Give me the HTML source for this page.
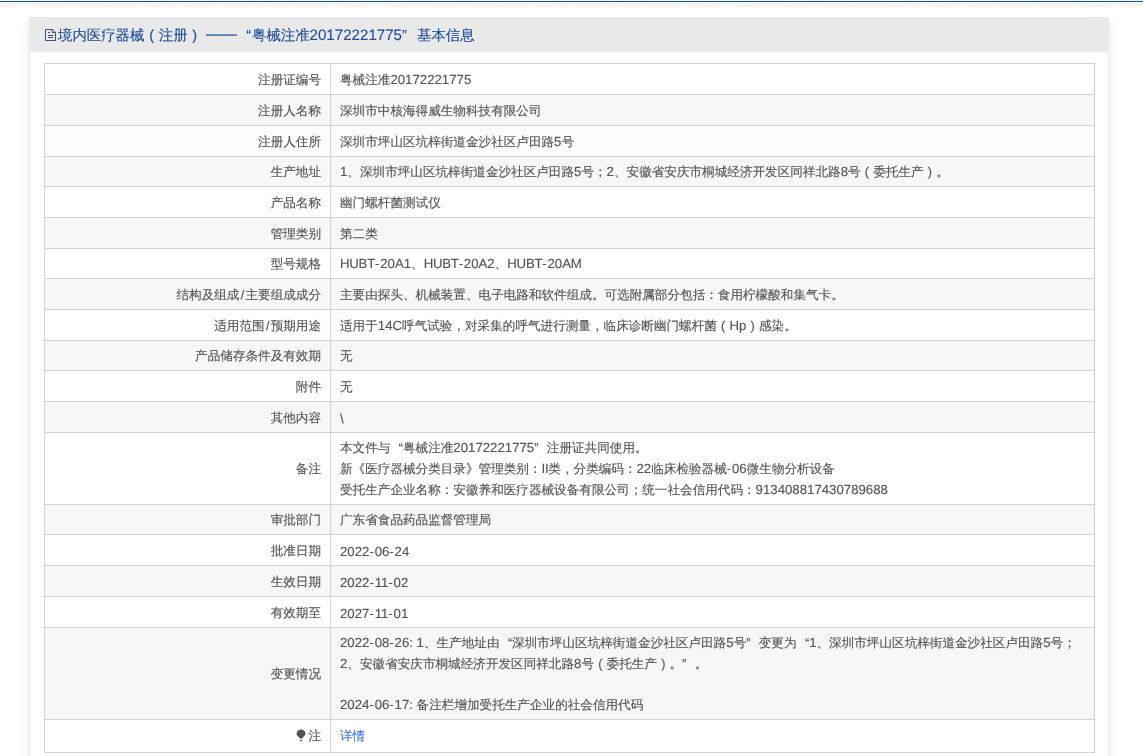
<!DOCTYPE html>
<html><head><meta charset="utf-8">
<style>
*{margin:0;padding:0;box-sizing:border-box}
html,body{width:1143px;height:756px;overflow:hidden;background:#fff}
body{font-family:"Liberation Sans",sans-serif;font-size:12.6px;color:#555;-webkit-text-stroke-width:0.15px;position:relative;text-spacing-trim:space-all;text-rendering:geometricPrecision}
.topline{position:absolute;left:0;top:1px;width:1143px;height:1px;background:#244d82}
.wrap{position:absolute;left:0;top:0;width:1143px;height:756px;will-change:transform}
.top0{position:absolute;left:0;top:0;width:1143px;height:1px;background:#e6f8fa}
.hatch{position:absolute;left:0;top:3px;width:1143px;height:4px;background:repeating-linear-gradient(135deg,#faf0e2 0,#faf0e2 1.2px,#f4f8fc 1.2px,#f4f8fc 3.15px)}
.panel{position:absolute;left:29px;top:17px;width:1080px;height:760px;background:#fff;border:1px solid #e9e9e9;box-shadow:-7px 0 9px -5px rgba(0,0,0,.07),7px 0 9px -5px rgba(0,0,0,.07)}
.ph{position:absolute;left:29px;top:17px;width:1080px;height:35px;background:#e9e9e9;color:#1f4f9c;font-size:14.4px;line-height:35px;white-space:nowrap}
.ph .t{position:absolute;left:29px;top:1px}
.ico{position:absolute;left:16px;top:11px;width:12px;height:14px}
.lt{font-size:1.05em}
.hy{letter-spacing:0.8px}
.lu{letter-spacing:-0.25px}
.ph .lt{letter-spacing:0}
.sl{display:inline-block;width:6px;text-align:center}
.pc{display:inline-block;width:1em;text-align:center}
.qo{display:inline-block;width:1em;text-align:right}
.hqo{display:inline-block;width:11px;padding-right:1px;text-align:right}
.hqc{display:inline-block;width:15px;text-align:left}
.dash{font-size:15.35px;position:relative;top:-1px}
.qc{display:inline-block;width:1em;text-align:left}
.hl{position:absolute;left:44px;width:1051px;height:1px;background:#d2d2d2}
.vl{position:absolute;top:63px;width:1px;height:690px;background:#d2d2d2}
.r{position:absolute;left:45px;width:1049px;background:#fff}
.r.g{background:#f7f7f7}
.r.h{background:#fbfcfe}
.l{position:absolute;left:0;top:0;width:285px;height:100%;text-align:right;padding-right:9px;display:flex;align-items:center;justify-content:flex-end;white-space:nowrap}
.v{position:absolute;left:286px;top:0;right:0;height:100%;padding-left:9px;display:flex;align-items:center;white-space:nowrap}
.m .v{line-height:20.8px}
.l>div,.v>div{position:relative;top:1px}
.last .l>div,.last .v>div{top:0}
a{color:#3d7ad6;text-decoration:none}
.pin{display:inline-block;width:10px;height:13px;margin-right:2px;vertical-align:-2px}
</style></head><body>
<div class="wrap">
<div class="top0"></div><div class="topline"></div><div class="hatch"></div>
<div class="panel"></div>
<div class="ph"><svg class="ico" viewBox="0 0 12 14"><path d="M0.5 1.5H7.5L10.5 4.5V12.5H0.5Z" fill="none" stroke="#42507e" stroke-width="1"/><path d="M7 1.5V4.5H10.5M3 4.5H5M3 7.5H8.5M3 9.5H8" fill="none" stroke="#42507e" stroke-width="1"/></svg><span class="t">境内医疗器械<span class="pc">(</span>注册<span class="pc">)</span><span class="lt"> </span><span class="dash">——</span><span class="lt"> </span><span class="hqo">“</span>粤械注准<span class="lt">20172221775</span><span class="hqc">”</span>基本信息</span></div>
<div class="r" style="top:64px;height:30px"><div class="l"><div>注册证编号</div></div><div class="v"><div>粤械注准<span class="lt">20172221775</span></div></div></div>
<div class="r g" style="top:95px;height:30px"><div class="l"><div>注册人名称</div></div><div class="v"><div>深圳市中核海得威生物科技有限公司</div></div></div>
<div class="r h" style="top:126px;height:30px"><div class="l"><div>注册人住所</div></div><div class="v"><div>深圳市坪山区坑梓街道金沙社区卢田路<span class="lt">5</span>号</div></div></div>
<div class="r g" style="top:157px;height:29px"><div class="l"><div>生产地址</div></div><div class="v"><div><span class="lt">1</span>、深圳市坪山区坑梓街道金沙社区卢田路<span class="lt">5</span>号；<span class="lt">2</span>、安徽省安庆市桐城经济开发区同祥北路<span class="lt">8</span>号<span class="pc">(</span>委托生产<span class="pc">)</span>。</div></div></div>
<div class="r" style="top:187px;height:30px"><div class="l"><div>产品名称</div></div><div class="v"><div>幽门螺杆菌测试仪</div></div></div>
<div class="r g" style="top:218px;height:30px"><div class="l"><div>管理类别</div></div><div class="v"><div>第二类</div></div></div>
<div class="r" style="top:249px;height:29px"><div class="l"><div>型号规格</div></div><div class="v"><div><span class="lt"><span class="lu">HUBT</span><span class="hy">-</span>20A1</span>、<span class="lt"><span class="lu">HUBT</span><span class="hy">-</span>20A2</span>、<span class="lt"><span class="lu">HUBT</span><span class="hy">-</span>20<span class="lu">AM</span></span></div></div></div>
<div class="r g" style="top:279px;height:30px"><div class="l"><div>结构及组成<span class="sl">/</span>主要组成成分</div></div><div class="v"><div>主要由探头、机械装置、电子电路和软件组成。可选附属部分包括：食用柠檬酸和集气卡。</div></div></div>
<div class="r" style="top:310px;height:30px"><div class="l"><div>适用范围<span class="sl">/</span>预期用途</div></div><div class="v"><div>适用于<span class="lt">14C</span>呼气试验，对采集的呼气进行测量，临床诊断幽门螺杆菌<span class="pc">(</span><span class="lt">Hp</span><span class="pc">)</span>感染。</div></div></div>
<div class="r g" style="top:341px;height:29px"><div class="l"><div>产品储存条件及有效期</div></div><div class="v"><div>无</div></div></div>
<div class="r" style="top:371px;height:30px"><div class="l"><div>附件</div></div><div class="v"><div>无</div></div></div>
<div class="r g" style="top:402px;height:30px"><div class="l"><div>其他内容</div></div><div class="v"><div><span class="lt">\</span></div></div></div>
<div class="r m" style="top:433px;height:71px"><div class="l"><div>备注</div></div><div class="v"><div>本文件与<span class="qo">“</span>粤械注准<span class="lt">20172221775</span><span class="qc">”</span>注册证共同使用。<br>新《医疗器械分类目录》管理类别：<span class="lt"><span class="lu">II</span></span>类，分类编码：<span class="lt">22</span>临床检验器械<span class="lt"><span class="hy">-</span>06</span>微生物分析设备<br>受托生产企业名称：安徽养和医疗器械设备有限公司；统一社会信用代码：<span class="lt">913408817430789688</span></div></div></div>
<div class="r g" style="top:505px;height:29px"><div class="l"><div>审批部门</div></div><div class="v"><div>广东省食品药品监督管理局</div></div></div>
<div class="r" style="top:535px;height:30px"><div class="l"><div>批准日期</div></div><div class="v"><div><span class="lt">2022<span class="hy">-</span>06<span class="hy">-</span>24</span></div></div></div>
<div class="r g" style="top:566px;height:30px"><div class="l"><div>生效日期</div></div><div class="v"><div><span class="lt">2022<span class="hy">-</span>11<span class="hy">-</span>02</span></div></div></div>
<div class="r" style="top:597px;height:30px"><div class="l"><div>有效期至</div></div><div class="v"><div><span class="lt">2027<span class="hy">-</span>11<span class="hy">-</span>01</span></div></div></div>
<div class="r g m" style="top:628px;height:91px"><div class="l"><div>变更情况</div></div><div class="v"><div><span class="lt">2022<span class="hy">-</span>08<span class="hy">-</span>26: 1</span>、生产地址由<span class="qo">“</span>深圳市坪山区坑梓街道金沙社区卢田路<span class="lt">5</span>号<span class="qc">”</span>变更为<span class="qo">“</span><span class="lt">1</span>、深圳市坪山区坑梓街道金沙社区卢田路<span class="lt">5</span>号；<br><span class="lt">2</span>、安徽省安庆市桐城经济开发区同祥北路<span class="lt">8</span>号<span class="pc">(</span>委托生产<span class="pc">)</span>。<span class="qc">”</span>。<br><br><span class="lt">2024<span class="hy">-</span>06<span class="hy">-</span>17: </span>备注栏增加受托生产企业的社会信用代码</div></div></div>
<div class="r last" style="top:720px;height:32px"><div class="l"><div><svg class="pin" viewBox="0 0 10 13"><path d="M5 0.5C7.6 0.5 9.4 2.3 9.4 4.6C9.4 6.6 7.6 8.2 5 10C2.4 8.2 0.6 6.6 0.6 4.6C0.6 2.3 2.4 0.5 5 0.5Z" fill="#525252"/><ellipse cx="5" cy="11.6" rx="1.6" ry="0.7" fill="#525252"/></svg>注</div></div><div class="v"><div><a>详情</a></div></div></div>
<div class="hl" style="top:63px"></div><div class="hl" style="top:94px"></div><div class="hl" style="top:125px"></div><div class="hl" style="top:156px"></div><div class="hl" style="top:186px"></div><div class="hl" style="top:217px"></div><div class="hl" style="top:248px"></div><div class="hl" style="top:278px"></div><div class="hl" style="top:309px"></div><div class="hl" style="top:340px"></div><div class="hl" style="top:370px"></div><div class="hl" style="top:401px"></div><div class="hl" style="top:432px"></div><div class="hl" style="top:504px"></div><div class="hl" style="top:534px"></div><div class="hl" style="top:565px"></div><div class="hl" style="top:596px"></div><div class="hl" style="top:627px"></div><div class="hl" style="top:719px"></div><div class="hl" style="top:752px"></div>
<div class="vl" style="left:44px"></div><div class="vl" style="left:330px"></div><div class="vl" style="left:1094px"></div>
</div>
</body></html>
